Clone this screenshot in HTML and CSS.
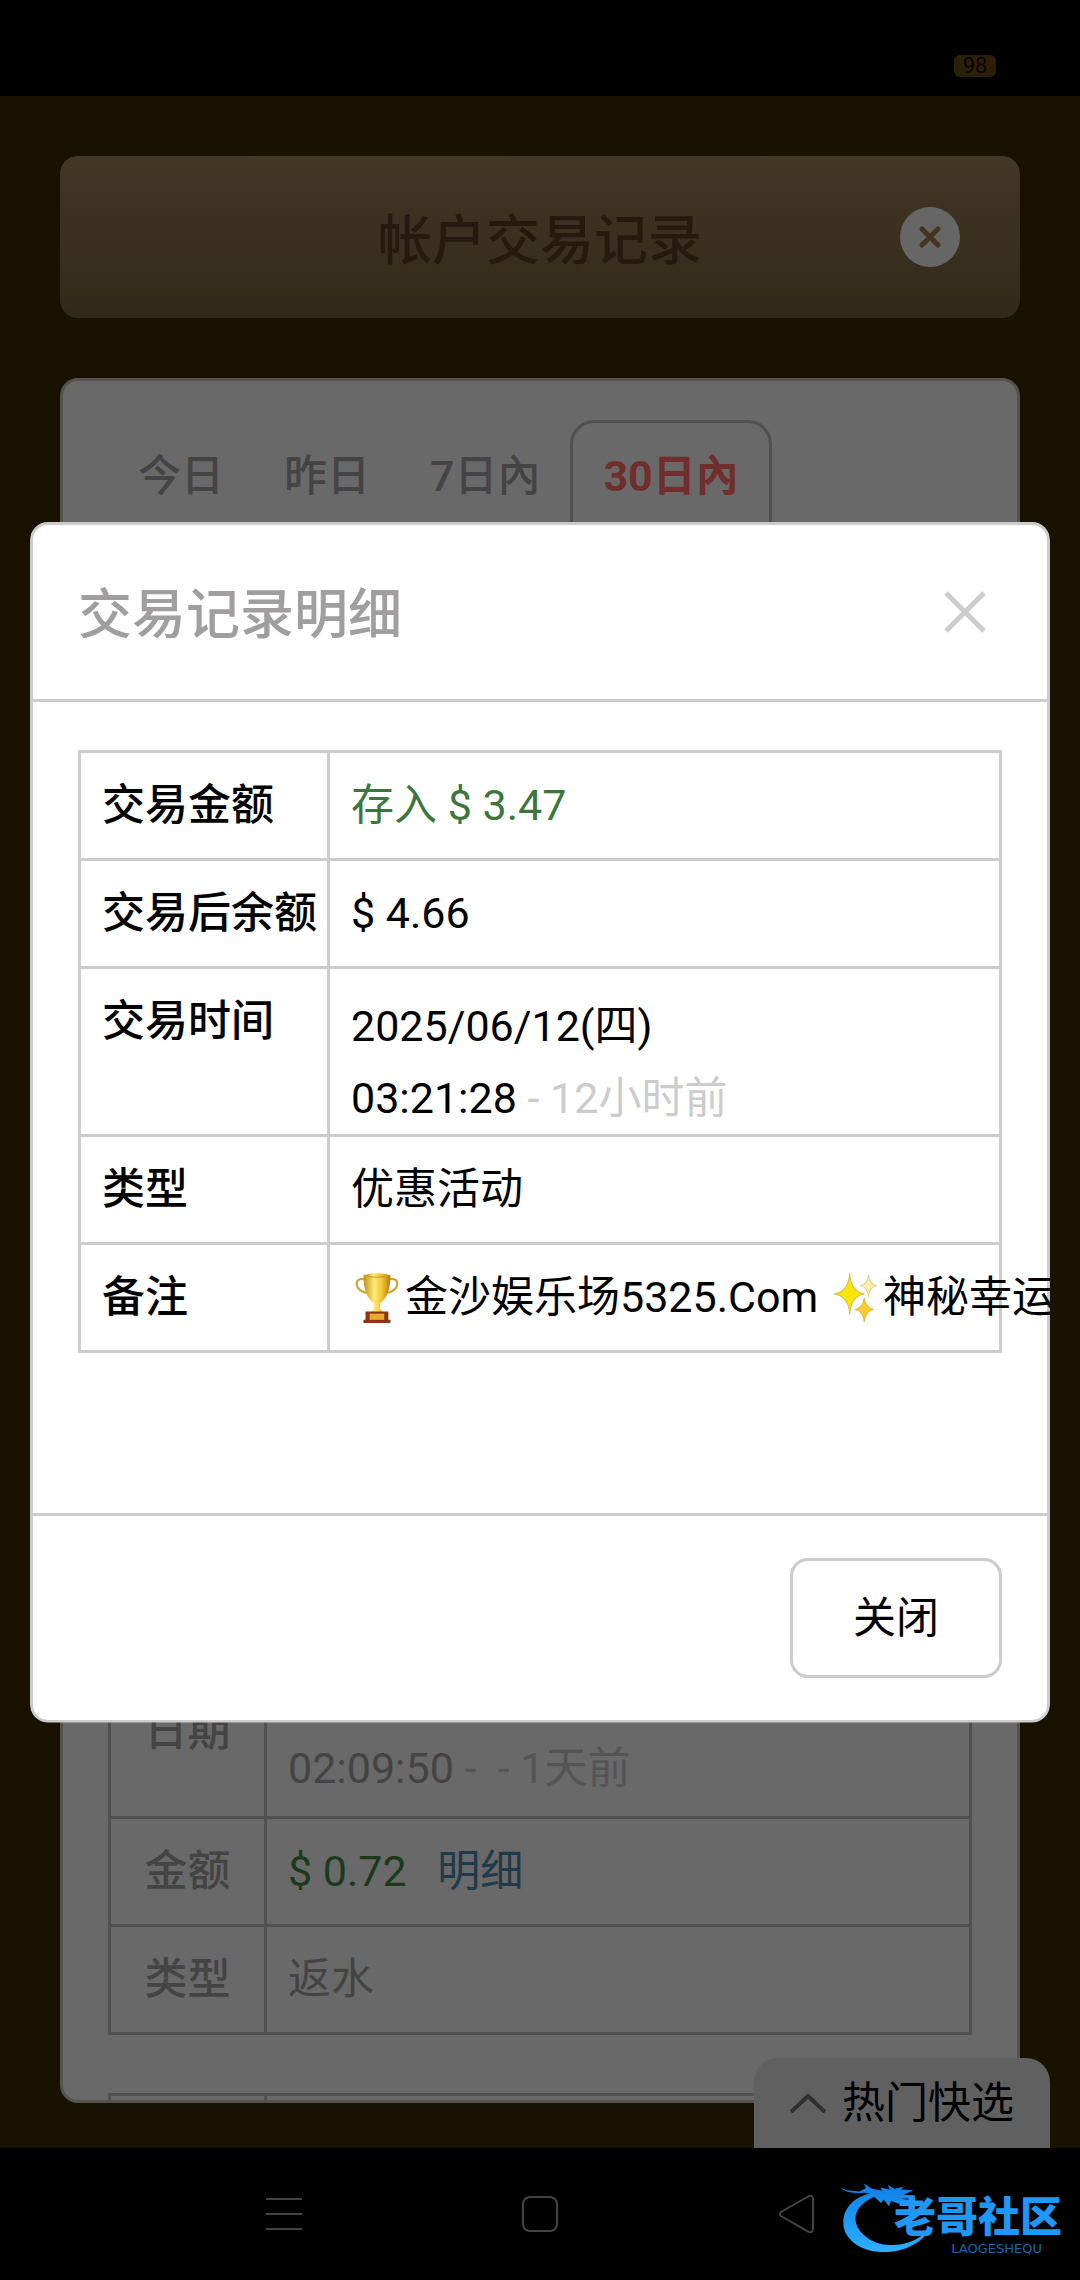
FILE: index.html
```
<!DOCTYPE html>
<html lang="zh-CN">
<head>
  <meta charset="UTF-8" />
  <title>帐户交易记录</title>
  <meta name="viewport" content="width=device-width, initial-scale=1.0" />
  <link rel="stylesheet" href="styles.css">
</head>
<body>
  <div class="status-bar">
    <span class="battery">98</span>
  </div>

  <div class="app">
    <main class="page">
      <header class="page-title">
        <h1>帐户交易记录</h1>
        <button class="round-close" type="button" aria-label="关闭">
          <svg viewBox="0 0 24 24" width="24" height="24"><path d="M4 4l16 16M20 4L4 20" /></svg>
        </button>
      </header>

      <section class="panel">
        <nav class="tabs">
          <a href="#today">今日</a>
          <a href="#yesterday">昨日</a>
          <a href="#week">7日內</a>
          <a href="#month" class="active">30日內</a>
        </nav>

        <div class="records">
          <table class="record">
            <tr>
              <th>日期</th>
              <td class="time"><br>02:09:50 <span class="ago">-&nbsp; - 1天前</span></td>
            </tr>
            <tr>
              <th>金额</th>
              <td><span class="plus">$ 0.72</span> <a href="#detail" class="detail">明细</a></td>
            </tr>
            <tr>
              <th>类型</th>
              <td>返水</td>
            </tr>
          </table>
          <table class="record next">
            <tr><th></th><td></td></tr>
          </table>
        </div>
      </section>
    </main>

    <button class="quick" type="button">
      <svg viewBox="0 0 36 20" width="36" height="20"><path d="M1 19L18 3l17 16" /></svg>
      <span>热门快选</span>
    </button>

    <div class="overlay">
      <div class="modal" role="dialog" aria-labelledby="modalTitle">
        <div class="modal-header">
          <h2 id="modalTitle">交易记录明细</h2>
          <button class="modal-close" type="button" aria-label="关闭">
            <svg viewBox="0 0 44 44" width="44" height="44"><path d="M3 3l38 38M41 3L3 41" /></svg>
          </button>
        </div>

        <div class="modal-body">
          <table class="info">
            <tr>
              <th>交易金额</th>
              <td class="green">存入 $ 3.47</td>
            </tr>
            <tr>
              <th>交易后余额</th>
              <td>$ 4.66</td>
            </tr>
            <tr>
              <th>交易时间</th>
              <td class="time">2025/06/12(四)<br>03:21:28 <span class="muted">- 12小时前</span></td>
            </tr>
            <tr>
              <th>类型</th>
              <td>优惠活动</td>
            </tr>
            <tr>
              <th>备注</th>
              <td class="remark">
                <div class="remark-line">
                  <svg class="emoji" viewBox="0 0 52 52">
                    <defs>
                      <linearGradient id="gold" x1="0" x2="1">
                        <stop offset="0" stop-color="#c98f12" />
                        <stop offset="0.4" stop-color="#fdeb7c" />
                        <stop offset="0.7" stop-color="#f0c02c" />
                        <stop offset="1" stop-color="#b97a0c" />
                      </linearGradient>
                    </defs>
                    <path d="M13 9C2 6 3 21 16 22M37 9c11-3 10 12-3 13" fill="none" stroke="#d3a127" stroke-width="2" />
                    <path d="M12 5q13-4 26 0c0 13-3 22-10 27v5l4 5H18l4-5v-5C15 27 12 18 12 5z" fill="url(#gold)" />
                    <path d="M13 5q12 4 24 0" fill="none" stroke="#c99621" />
                    <path d="M14 40h22v8h2v3H12v-3h2z" fill="#8a3515" />
                    <path d="M18 42h14v6H18z" fill="#e6ad2d" />
                  </svg>
                  <span>金沙娱乐场5325.Com&nbsp;</span>
                  <svg class="emoji" viewBox="0 0 52 52">
                    <path d="M20 3q1 18 14 20q-13 2-14 20q-1-18-15-20q14-2 15-20z" fill="#fbe60a" stroke="#d9c348" />
                    <path d="M38 5q1 9 8 10q-7 1-8 11q-1-10-8-11q7-1 8-10z" fill="#faeeb0" stroke="#e2d08a" />
                    <path d="M34 27q1 9 9 11q-8 1-9 12q-1-11-9-12q8-2 9-11z" fill="#fbd02d" stroke="#dfb945" />
                  </svg>
                  <span>神秘幸运</span>
                </div>
              </td>
            </tr>
          </table>
        </div>

        <div class="modal-footer">
          <button class="btn" type="button">关闭</button>
        </div>
      </div>
    </div>
  </div>

  <div class="nav-bar">
    <button type="button" aria-label="菜单">
      <svg viewBox="0 0 36 40" width="36" height="40"><path d="M0 5h36M0 20h36M0 35h36" /></svg>
    </button>
    <button type="button" aria-label="主页">
      <svg viewBox="0 0 36 40" width="36" height="40"><rect x="1" y="3" width="34" height="34" rx="7" /></svg>
    </button>
    <button type="button" aria-label="返回">
      <svg viewBox="0 0 36 40" width="36" height="40"><path d="M31 2L3 18q-2 2 0 4l28 16q4 1 4-3V5q0-4-4-3z" /></svg>
    </button>
  </div>

  <div class="logo">
    <svg class="dragon" viewBox="60 70 280 220">
      <defs>
        <linearGradient id="blue" x1="0" y1="0" x2="0" y2="1">
          <stop offset="0" stop-color="#0d7fe6" />
          <stop offset="1" stop-color="#2cb0ff" />
        </linearGradient>
      </defs>
      <path fill="url(#blue)" d="M150 104C78 120 58 178 76 220c40 82 208 80 258-20c-48 64-140 72-190 38c-56-38-50-94 18-124l20 18l8-10l16 20l6-16l20 8l36 2l8-12l-34-4l40-2l-2-8l-30-2l28-14l-36-2l6-8l-26 6l-20-12l6 14l-28-6l6 10l-30-6l-26-16l8 14l-20 10l-38-4l-20-8q20 20 72 16z" />
    </svg>
    <div class="logo-name">老哥社区</div>
    <div class="logo-sub">LAOGESHEQU</div>
  </div>
</body>
</html>
```
FILE: styles.css
```
* {
  box-sizing: border-box;
}

body {
  margin: 0;
  min-height: 100vh;
  display: flex;
  flex-direction: column;
  position: relative;
  background: #000;
  color: #000;
  font-family: Roboto, "Noto Sans CJK SC", sans-serif;
  font-size: 43px;
  line-height: 63px;
}

h1,
h2 {
  margin: 0;
  padding-top: 8px;
  font-size: 54px;
  font-weight: 500;
}

button {
  font: inherit;
  color: inherit;
  border: none;
  background: none;
  padding: 0;
  cursor: pointer;
}

svg {
  display: block;
  fill: none;
}

a {
  color: inherit;
  text-decoration: none;
}

table {
  width: 100%;
  border-collapse: collapse;
}

.status-bar {
  height: 96px;
  padding: 36px 84px 0 0;
  display: flex;
  align-items: center;
  justify-content: flex-end;
}

.battery {
  width: 42px;
  border-radius: 6px;
  background: #2c1f07;
  color: #080500;
  font-size: 22px;
  line-height: 22px;
  text-align: center;
}

.app {
  flex: 1;
  display: flex;
  position: relative;
  background: #191200;
}

.page {
  flex: 1;
  display: flex;
  flex-direction: column;
  gap: 60px;
  padding: 60px 60px 45px;
}

.page-title {
  display: grid;
  grid-template-columns: 1fr auto 1fr;
  align-items: center;
  height: 162px;
  padding: 0 60px;
  border-radius: 18px;
  background: linear-gradient(#433726, #32291a);
  color: #261a0e;
}

.page-title h1 {
  grid-column: 2;
}

.round-close {
  justify-self: end;
  width: 60px;
  height: 60px;
  display: grid;
  place-items: center;
  border-radius: 50%;
  background: #666;
}

.round-close path {
  stroke: #43351f;
  stroke-width: 5;
  stroke-linecap: round;
}

.panel {
  flex: 1;
  display: flex;
  flex-direction: column;
  overflow: hidden;
  border: 3px solid #55534c;
  border-radius: 18px;
  background: #696969;
  color: #444;
}

.tabs {
  display: flex;
  padding: 39px 45px 0;
  font-weight: 500;
}

.tabs a {
  padding: 25px 30px 24px;
}

.tabs .active {
  padding-top: 22px;
  border: 3px solid #505050;
  border-bottom: none;
  border-radius: 24px 24px 0 0;
  color: #702e2d;
  font-weight: 700;
}

.records {
  display: flex;
  flex-direction: column;
  gap: 58px;
  margin-top: auto;
  padding: 0 45px;
}

.record th,
.record td {
  border: 3px solid #505050;
  padding: 21px;
}

.record th {
  width: 156px;
  font-weight: 500;
}

.record td {
  text-align: left;
}

.record .time {
  padding-bottom: 15px;
  line-height: 66px;
}

.record.next th,
.record.next td {
  height: 6px;
  padding: 0;
  border-bottom: none;
}

.ago {
  color: #545454;
}

.plus {
  color: #1c3a1b;
}

.detail {
  margin-left: 20px;
  color: #1f3a4b;
}

/* floating button over the panel */
.quick {
  position: absolute;
  right: 30px;
  bottom: 0;
  height: 90px;
  padding: 0 36px;
  display: flex;
  align-items: center;
  gap: 16px;
  border-radius: 24px 24px 0 0;
  background: #606060;
}

.quick path {
  stroke: #303030;
  stroke-width: 4;
}

.overlay {
  position: absolute;
  inset: 0;
  display: flex;
  align-items: center;
  padding: 0 30px;
}

.modal {
  width: 100%;
  border: 3px solid #ccc;
  border-radius: 18px;
  background: #fff;
  /* long remarks run over the border and are cut at its outer edge */
  clip-path: inset(0 round 18px);
}

.modal-header {
  display: flex;
  align-items: center;
  justify-content: space-between;
  height: 177px;
  padding: 0 60px 0 45px;
  border-bottom: 3px solid #ccc;
}

.modal-header h2 {
  color: #a09e9e;
}

.modal-close path {
  stroke: #ccc;
  stroke-width: 5;
}

.modal-body {
  padding: 48px 45px 160px;
}

.info {
  table-layout: fixed;
}

.info th,
.info td {
  border: 3px solid #ccc;
  padding: 21px;
  text-align: left;
  vertical-align: top;
}

.info th {
  width: 249px;
  padding-right: 0;
  font-weight: 500;
  white-space: nowrap;
}

.info .green {
  color: #3c763d;
}

.info .time {
  padding-bottom: 0;
  line-height: 72px;
}

.muted {
  color: #ccc;
}

.remark-line {
  display: flex;
  align-items: center;
  white-space: nowrap;
}

.emoji {
  flex: none;
  width: 54px;
  height: 54px;
}

.modal-footer {
  display: flex;
  justify-content: flex-end;
  padding: 42px 45px;
  border-top: 3px solid #ccc;
}

.btn {
  padding: 26px 60px 25px;
  border: 3px solid #ccc;
  border-radius: 18px;
  background: #fff;
}

.nav-bar {
  height: 132px;
  display: grid;
  grid-template-columns: repeat(3, 256px);
  justify-content: center;
}

.nav-bar button {
  display: grid;
  place-items: center;
}

.nav-bar svg {
  stroke: #444;
  stroke-width: 2;
}

/* site mark laid over the navigation bar */
.logo {
  position: absolute;
  right: 18px;
  bottom: 24px;
  width: 222px;
  height: 74px;
  color: #1f97f5;
}

.dragon {
  width: 94px;
  height: 74px;
}

.logo-name {
  position: absolute;
  right: 0;
  bottom: 17px;
  font-size: 42px;
  font-weight: 900;
  line-height: 42px;
}

.logo-sub {
  position: absolute;
  right: 20px;
  bottom: 0;
  color: #1468a8;
  font-family: "DejaVu Sans", sans-serif;
  font-size: 13px;
  line-height: 14px;
}
```
